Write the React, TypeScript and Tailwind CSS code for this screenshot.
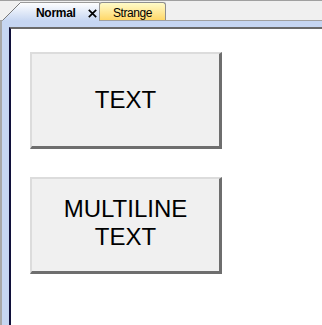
import React from "react";

function ActiveTab() {
  return (
    <div className="relative z-10 -mb-px -mr-px h-[19px] w-[98px]">
      <svg className="absolute inset-0" width="98" height="19" viewBox="0 0 98 19">
        <defs>
          <linearGradient id="ag" x1="0" y1="0" x2="0" y2="1">
            <stop offset="0" stopColor="#ffffff" />
            <stop offset="1" stopColor="#c6d6f2" />
          </linearGradient>
        </defs>
        <polygon points="0,19 18,0.5 97.5,0.5 97.5,19" fill="url(#ag)" />
        <polyline points="0.5,18.5 18.5,0.5" fill="none" stroke="#7a7a7a" strokeWidth="1" />
        <line x1="18" y1="0.5" x2="97.5" y2="0.5" stroke="#9a9a9a" strokeWidth="1" />
        <line x1="97.5" y1="0.5" x2="97.5" y2="19" stroke="#9a9a9a" strokeWidth="1" />
      </svg>
      <div className="relative flex h-full items-center pl-[34px] pt-[2px]">
        <span className="text-[12px] font-bold leading-none tracking-[-0.3px] text-black">Normal</span>
        <svg className="ml-[12px] mt-[2px]" width="9" height="9" viewBox="0 0 9 9">
          <path d="M0.8 0.8 L8.2 8.2 M8.2 0.8 L0.8 8.2" stroke="#000" strokeWidth="1.7" />
        </svg>
      </div>
    </div>
  );
}

export default function App() {
  return (
    <div className="flex h-[325px] w-[322px] flex-col overflow-hidden bg-[#f0f0f0]" style={{ fontFamily: '"Liberation Sans", Arial, sans-serif' }}>
      <div className="flex h-[20px] items-end border-t border-[#a0a0a0] pl-[2px]">
        <ActiveTab />
        <div className="flex h-[18px] w-[67px] items-center justify-center rounded-t-[3px] border border-b-0 border-[#8e8e8e] bg-gradient-to-b from-[#fffbc8] to-[#ffd766] pt-[2px]">
          <span className="text-[12px] leading-none tracking-[-0.4px] text-black">Strange</span>
        </div>
      </div>
      <div className="flex flex-1 flex-col border-l-2 border-t border-l-[#a8a8a8] border-t-[#a0a0a0] bg-[#c6d6f2] pl-[7px] pt-[6px]">
        <div className="flex flex-1 flex-col gap-[28px] border-l-2 border-t-2 border-l-[#10103a] border-t-[#6a6a6a] bg-white pl-[19px] pt-[23px]">
          <div className="flex h-[97px] w-[192px] items-center justify-center border-b-[3px] border-l-2 border-r-[3px] border-t-2 border-b-[#6e6e6e] border-l-[#dcdcdc] border-r-[#6e6e6e] border-t-[#dcdcdc] bg-[#f0f0f0]">
            <span className="text-[24px] leading-[28px] text-black">TEXT</span>
          </div>
          <div className="flex h-[97px] w-[192px] items-center justify-center border-b-[3px] border-l-2 border-r-[3px] border-t-2 border-b-[#6e6e6e] border-l-[#dcdcdc] border-r-[#6e6e6e] border-t-[#dcdcdc] bg-[#f0f0f0] pb-[4px]">
            <span className="text-center text-[24px] leading-[28px] text-black">
              MULTILINE
              <br />
              TEXT
            </span>
          </div>
        </div>
      </div>
    </div>
  );
}
